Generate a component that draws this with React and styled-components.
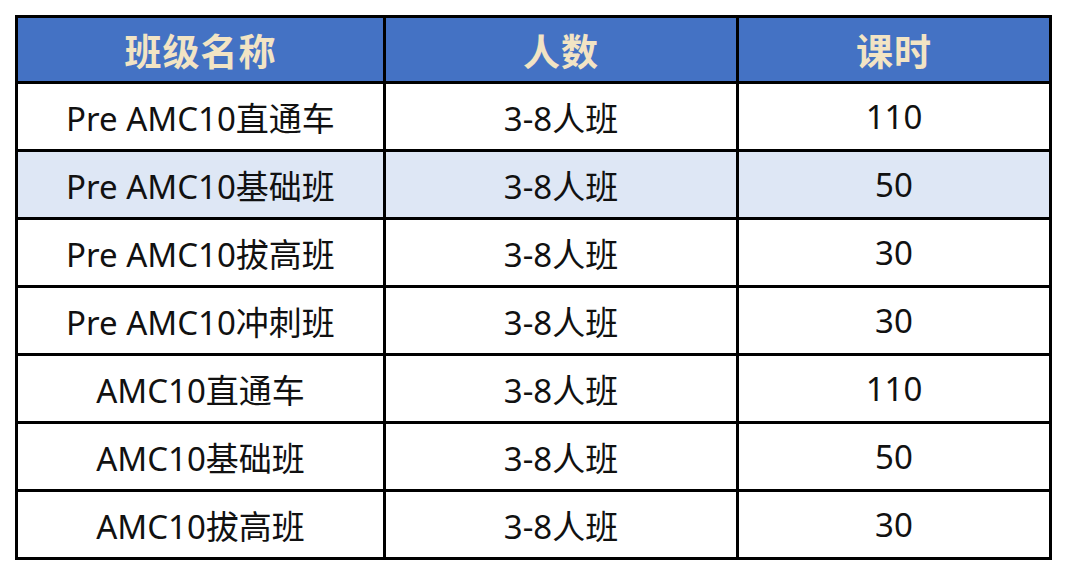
import React from "react";
import styled, { createGlobalStyle } from "styled-components";

const rows = [
  { name: "Pre AMC10直通车", size: "3-8人班", hours: "110" },
  { name: "Pre AMC10基础班", size: "3-8人班", hours: "50", shaded: true },
  { name: "Pre AMC10拔高班", size: "3-8人班", hours: "30" },
  { name: "Pre AMC10冲刺班", size: "3-8人班", hours: "30" },
  { name: "AMC10直通车", size: "3-8人班", hours: "110" },
  { name: "AMC10基础班", size: "3-8人班", hours: "50" },
  { name: "AMC10拔高班", size: "3-8人班", hours: "30" },
];

const App = () => {
  return (
    <>
      <GlobalStyle />
      <Page>
        <Table>
          <HeadCell>班级名称</HeadCell>
          <HeadCell>人数</HeadCell>
          <HeadCell>课时</HeadCell>
          {rows.map((r) => (
            <React.Fragment key={r.name}>
              <Cell $shaded={r.shaded}>{r.name}</Cell>
              <Cell $shaded={r.shaded}>{r.size}</Cell>
              <Cell $shaded={r.shaded}>{r.hours}</Cell>
            </React.Fragment>
          ))}
        </Table>
      </Page>
    </>
  );
};

const GlobalStyle = createGlobalStyle`
  html, body {
    margin: 0;
    padding: 0;
    background: #fff;
    overflow: hidden;
  }
  body {
    font-family: "Noto Sans", "Noto Sans CJK SC", sans-serif;
  }
`;

const Page = styled.div`
  width: 1068px;
  height: 563px;
  overflow: hidden;
  padding: 15px 0 0 15px;
  box-sizing: border-box;
  background: #fff;
`;

const Table = styled.div`
  display: grid;
  grid-template-columns: 365px 350px 310px;
  grid-template-rows: 63px;
  grid-auto-rows: 65px;
  gap: 3px;
  padding: 3px;
  width: max-content;
  background: #000;
`;

const HeadCell = styled.div`
  display: flex;
  align-items: center;
  justify-content: center;
  background: #4472c4;
  color: #f2e4c4;
  font-family: "Noto Sans CJK SC", sans-serif;
  font-weight: 700;
  font-size: 37px;
  letter-spacing: 1px;
`;

const Cell = styled.div`
  display: flex;
  align-items: center;
  justify-content: center;
  background: ${(p) => (p.$shaded ? "#dee7f5" : "#fff")};
  color: #111;
  font-family: "Noto Sans", "Noto Sans CJK SC", sans-serif;
  font-size: 33px;
`;

export default App;
